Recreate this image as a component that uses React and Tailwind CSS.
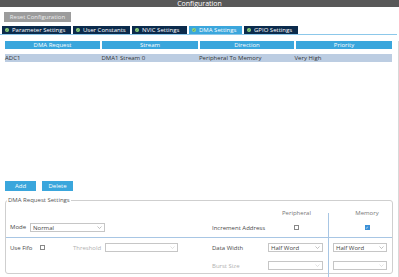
import React from 'react';

const font = { fontFamily: '"Open Sans", "DejaVu Sans", sans-serif' };

function Tab({ label, active, w }) {
    return (
        <div
            className={`flex items-center gap-[3px] pl-[3px] h-full ${active ? 'bg-[#3aa6dc]' : 'bg-[#0b2b4c]'} text-white`}
            style={{ width: w }}
        >
            <span className="w-[4px] h-[4px] rounded-full bg-[#8fd47a] flex items-center justify-center text-[3px] leading-none text-[#0b2b4c]">✓</span>
            <span className="text-[6px] leading-none whitespace-nowrap">{label}</span>
        </div>
    );
}

function Select({ value, w, disabled }) {
    return (
        <div
            className="h-[9px] border border-[#c6c6c6] bg-white flex items-center justify-between px-[2px] text-[6px] leading-none text-[#444]"
            style={{ width: w }}
        >
            <span>{value}</span>
            <svg width="5" height="3" viewBox="0 0 5 3"><path d="M0.5 0.5 L2.5 2.5 L4.5 0.5" stroke={disabled ? '#cfcfcf' : '#999'} strokeWidth="0.6" fill="none" /></svg>
        </div>
    );
}

function Check({ checked }) {
    return checked ? (
        <div className="w-[5px] h-[5px] bg-[#3a8fd6] flex items-center justify-center text-white text-[4px] leading-none">✓</div>
    ) : (
        <div className="w-[5px] h-[5px] border border-[#888] bg-white" />
    );
}

export default function App() {
    const cols = [
        { title: 'DMA Request', w: 95, value: 'ADC1' },
        { title: 'Stream', w: 96, value: 'DMA1 Stream 0' },
        { title: 'Direction', w: 94, value: 'Peripheral To Memory' },
        { title: 'Priority', w: 96, value: 'Very High' },
    ];

    return (
        <div className="w-[399px] h-[277px] overflow-hidden bg-white relative text-[#4a4a4a]" style={font}>
            {/* Title bar */}
            <div className="h-[7px] bg-[#585858] flex justify-center items-end overflow-hidden">
                <span className="text-white text-[7px] leading-[7px]">Configuration</span>
            </div>

            {/* Reset */}
            <div className="mt-[5px] ml-[4px] w-[67px] h-[10px] bg-[#9c9c9c] flex items-center justify-center text-[#ededed] text-[6px] leading-none">
                Reset Configuration
            </div>

            {/* Tabs */}
            <div className="mt-[4px] ml-[2px] flex gap-[2px] h-[8px]">
                <Tab label="Parameter Settings" w={69} />
                <Tab label="User Constants" w={57} />
                <Tab label="NVIC Settings" w={55} />
                <Tab label="DMA Settings" w={53} active />
                <Tab label="GPIO Settings" w={54} />
            </div>
            <div className="h-[1px] bg-[#8cc8ea] mr-[2px]" />

            <div className="border-r border-[#d8d8d8] h-[242px]">
                {/* Table */}
                <div className="mt-[6px] ml-[5px] flex gap-[2px]">
                    {cols.map(c => (
                        <div key={c.title} style={{ width: c.w }} className="h-[8px] bg-[#3aa6dc] text-white text-[6px] leading-none flex items-center justify-center">
                            {c.title}
                        </div>
                    ))}
                </div>
                <div className="mt-[5px] ml-[5px] w-[387px] h-[8px] bg-[#bccde2] flex text-[6px] leading-none text-[#333] items-center">
                    {cols.map(c => (
                        <div key={c.title} style={{ width: c.w + 2 }} className="whitespace-nowrap">{c.value}</div>
                    ))}
                </div>

                {/* Buttons */}
                <div className="mt-[119px] ml-[5px] flex gap-[6px]">
                    <div className="w-[31px] h-[10px] bg-[#3aa6dc] text-white text-[6px] leading-none flex items-center justify-center">Add</div>
                    <div className="w-[31px] h-[10px] bg-[#3aa6dc] text-white text-[6px] leading-none flex items-center justify-center">Delete</div>
                </div>

                {/* DMA Request Settings */}
                <fieldset className="mt-[6px] ml-[5px] w-[388px] h-[77px] border border-[#cfcfcf] rounded-[3px] p-0 m-0 relative">
                    <legend className="text-[6px] leading-[6px] text-[#555] px-[1px] ml-[1px]">DMA Request Settings</legend>
                    <div className="flex pt-[2px] text-[6px] leading-none">
                        <div className="w-[200px] flex flex-col">
                            <div className="h-[33px] flex items-end pb-[5px] pl-[4px] border-b border-[#a8c6e4]">
                                <span className="w-[20px] pb-[2px]">Mode</span>
                                <Select value="Normal" w={75} />
                            </div>
                            <div className="h-[19px] flex items-center pl-[4px]">
                                <span className="w-[30px]">Use Fifo</span>
                                <Check />
                                <span className="ml-[28px] w-[32px] text-[#b0b0b0]">Threshold</span>
                                <Select value="" w={73} disabled />
                            </div>
                        </div>
                        <div className="flex-1 flex flex-col">
                            <div className="flex h-[16px] items-center">
                                <div className="w-[76px]" />
                                <div className="w-[28px] text-[#777] text-center whitespace-nowrap">Peripheral</div>
                                <div className="ml-[39px] w-[36px] text-[#777] text-center">Memory</div>
                            </div>
                            <div className="h-[17px] flex items-center pb-[3px] border-b border-[#a8c6e4]">
                                <div className="w-[76px] pl-[6px] whitespace-nowrap">Increment Address</div>
                                <div className="w-[28px] flex justify-center"><Check /></div>
                                <div className="ml-[39px] w-[36px] flex justify-center"><Check checked /></div>
                            </div>
                            <div className="h-[19px] flex items-center">
                                <div className="w-[62px] pl-[6px]">Data Width</div>
                                <Select value="Half Word" w={55} />
                                <div className="ml-[10px]"><Select value="Half Word" w={54} /></div>
                            </div>
                            <div className="h-[17px] flex items-center">
                                <div className="w-[62px] pl-[6px] text-[#b0b0b0]">Burst Size</div>
                                <Select value="" w={55} disabled />
                                <div className="ml-[10px]"><Select value="" w={54} disabled /></div>
                            </div>
                        </div>
                    </div>
                    <div className="absolute left-[322px] top-[10px] w-[1px] h-[66px] bg-[#a8c6e4]" />
                </fieldset>
            </div>
        </div>
    );
}
